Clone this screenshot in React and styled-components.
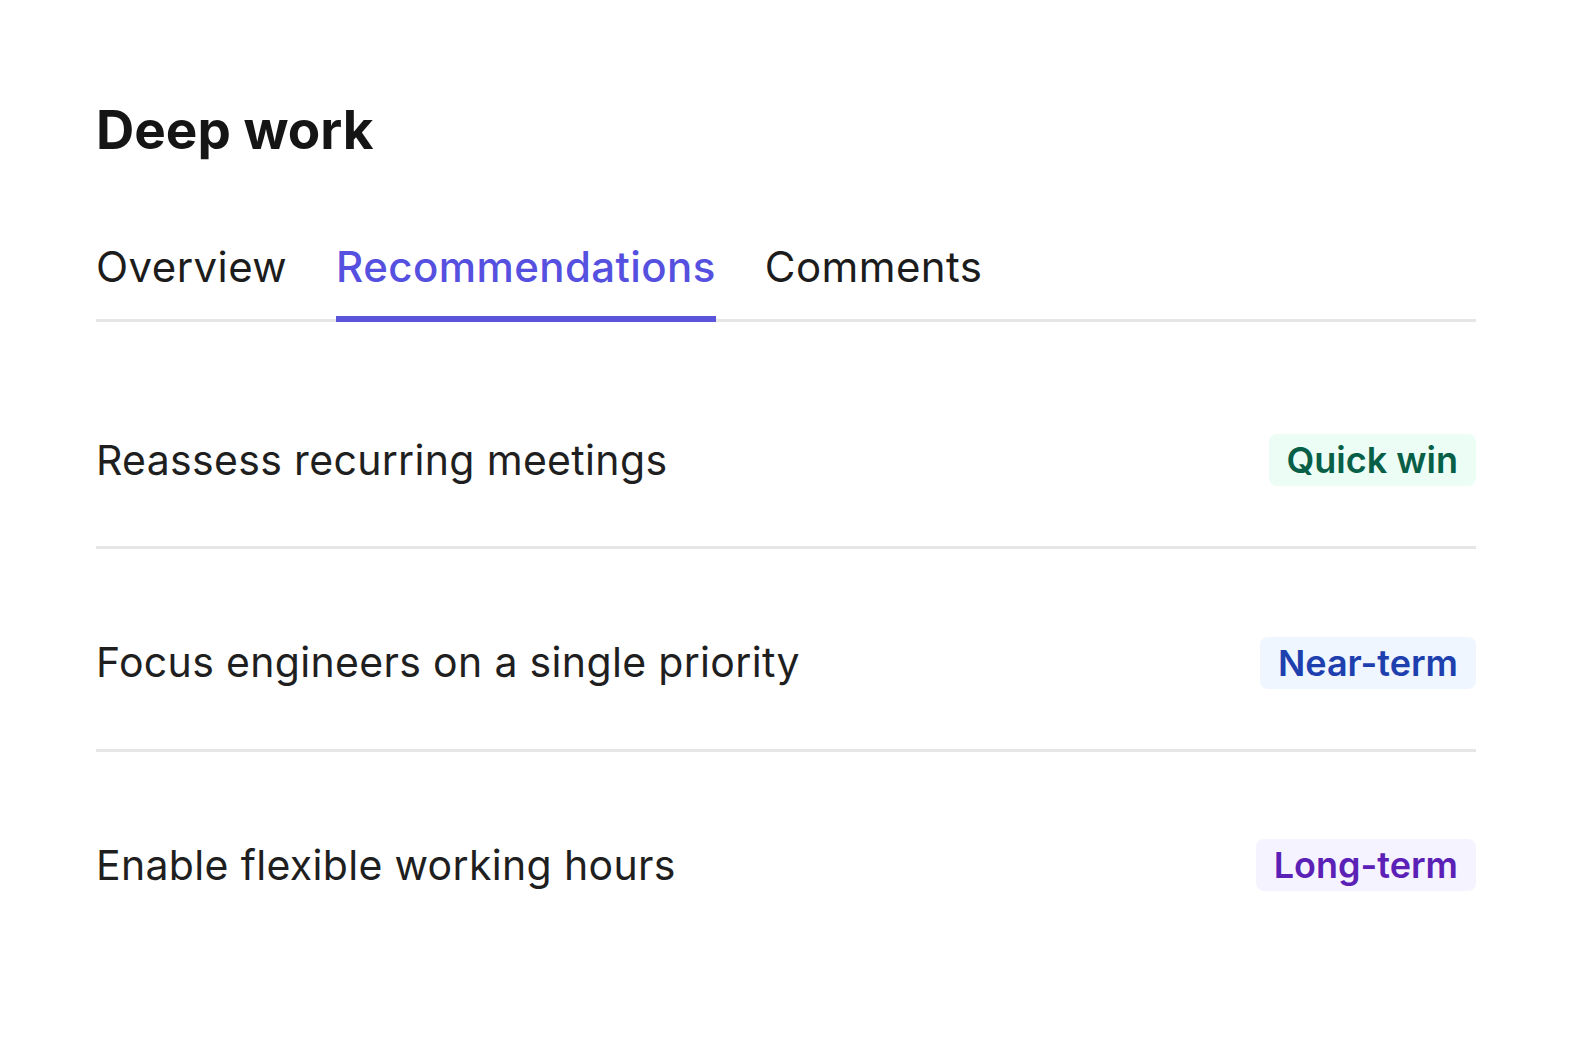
import React, { useState } from "react";
import styled, { createGlobalStyle } from "styled-components";

const GlobalStyle = createGlobalStyle`
  html, body {
    margin: 0;
    padding: 0;
    background: #ffffff;
  }
  body {
    font-family: Inter, "Noto Sans", "Liberation Sans", sans-serif;
    color: #1a1a1a;
    -webkit-font-smoothing: antialiased;
  }
`;

const Page = styled.main`
  padding: 99px 96px 0;
`;

const Title = styled.h1`
  margin: 0;
  font-size: 53px;
  line-height: 1.2;
  font-weight: 700;
  color: #151515;
`;

const TabList = styled.div`
  display: flex;
  gap: 49px;
  margin-top: 72px;
  box-shadow: inset 0 -3px 0 #e6e6e6;
`;

const Tab = styled.button`
  appearance: none;
  background: none;
  border: 0;
  border-bottom: 6px solid ${({ $active }) => ($active ? "#5a55da" : "transparent")};
  padding: 0 0 18px;
  margin: 0;
  font-family: inherit;
  font-size: 42px;
  letter-spacing: 0.01em;
  line-height: 1.5;
  font-weight: ${({ $active }) => ($active ? 500 : 400)};
  color: ${({ $active }) => ($active ? "#5650e0" : "#1c1c1c")};
  cursor: pointer;
`;

const List = styled.ul`
  list-style: none;
  margin: 0;
  padding: 25px 0 0;
`;

const Row = styled.li`
  display: flex;
  align-items: center;
  justify-content: space-between;
  padding: 83px 0 55px;
  border-bottom: 3px solid #e6e6e6;

  &:last-child {
    border-bottom: 0;
  }
`;

const RowText = styled.span`
  font-size: 41px;
  letter-spacing: 0.008em;
  line-height: 1.5;
  color: #1f1f1f;
`;

const badgeTones = {
  quick: { bg: "#ecfdf5", fg: "#065f46" },
  near: { bg: "#eff6ff", fg: "#1e40af" },
  long: { bg: "#f5f3ff", fg: "#5b21b6" },
};

const Badge = styled.span`
  display: inline-block;
  height: 52px;
  line-height: 52px;
  padding: 0 18px;
  border-radius: 8px;
  font-size: 36px;
  font-weight: 600;
  background: ${({ $tone }) => badgeTones[$tone].bg};
  color: ${({ $tone }) => badgeTones[$tone].fg};
`;

const tabs = ["Overview", "Recommendations", "Comments"];

const items = [
  { text: "Reassess recurring meetings", label: "Quick win", tone: "quick" },
  { text: "Focus engineers on a single priority", label: "Near-term", tone: "near" },
  { text: "Enable flexible working hours", label: "Long-term", tone: "long" },
];

export default function App() {
  const [active, setActive] = useState("Recommendations");

  return (
    <>
      <GlobalStyle />
      <Page>
        <Title>Deep work</Title>
        <TabList>
          {tabs.map((t) => (
            <Tab key={t} $active={t === active} onClick={() => setActive(t)}>
              {t}
            </Tab>
          ))}
        </TabList>
        <List>
          {items.map((item) => (
            <Row key={item.text}>
              <RowText>{item.text}</RowText>
              <Badge $tone={item.tone}>{item.label}</Badge>
            </Row>
          ))}
        </List>
      </Page>
    </>
  );
}
